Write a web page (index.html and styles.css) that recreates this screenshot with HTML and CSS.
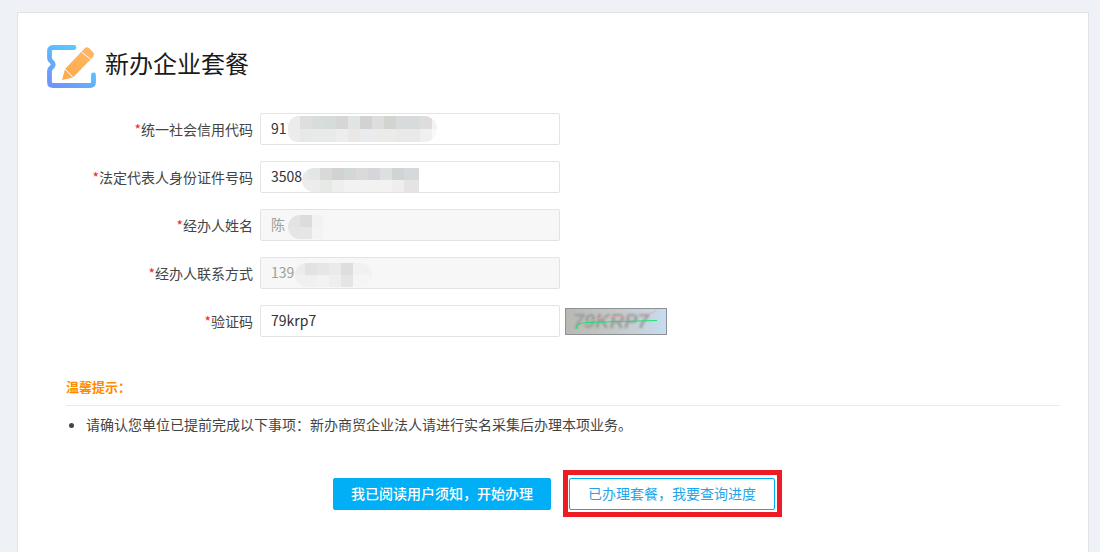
FILE: index.html
```html
<!DOCTYPE html>
<html lang="zh-CN">
<head>
<meta charset="utf-8">
<title>新办企业套餐</title>
<link rel="stylesheet" href="styles.css">
</head>
<body>
<main class="card">
  <header class="head">
    <svg class="logo" viewBox="0 0 50 44" width="50" height="44" aria-hidden="true">
      <defs>
        <linearGradient id="tk" x1="0.9" y1="0" x2="0.1" y2="1">
          <stop offset="0" stop-color="#4fd6ff"/>
          <stop offset="1" stop-color="#6f94fb"/>
        </linearGradient>
        <linearGradient id="pn" x1="1" y1="0" x2="0" y2="1">
          <stop offset="0" stop-color="#ffb868"/>
          <stop offset="1" stop-color="#ffa94a"/>
        </linearGradient>
      </defs>
      <path d="M28 3.500H7Q3.500 3.500 3.500 7V14Q3.500 16 5.500 17.500Q9 20.500 5.500 23.500Q3.500 25 3.500 27V38Q3.500 41.500 7 41.500H44Q47.500 41.500 47.500 38V31" fill="none" stroke="url(#tk)" stroke-width="4.800" stroke-linecap="round"/>
      <path d="M16 36L19 25L38.500 4.500Q40.500 2.500 43 4L47 8Q49 10.500 47 13L27 33.500Z" fill="url(#pn)"/>
      <path d="M19 25L27 33.500M36 8.500L45 15.500" stroke="#fff" stroke-width="1" fill="none"/>
    </svg>
    <h1 class="title">新办企业套餐</h1>
  </header>

  <form class="form">
    <div class="row">
      <label class="label"><span class="req">*</span>统一社会信用代码</label>
      <div class="field">
        <input class="input" type="text" value="91">
        <span class="blob blob-a"></span>
      </div>
    </div>
    <div class="row">
      <label class="label"><span class="req">*</span>法定代表人身份证件号码</label>
      <div class="field">
        <input class="input" type="text" value="3508">
        <span class="blob blob-b"></span>
      </div>
    </div>
    <div class="row">
      <label class="label"><span class="req">*</span>经办人姓名</label>
      <div class="field">
        <input class="input" type="text" value="陈" disabled>
        <span class="blob blob-c"></span>
      </div>
    </div>
    <div class="row">
      <label class="label"><span class="req">*</span>经办人联系方式</label>
      <div class="field">
        <input class="input" type="text" value="139" disabled>
        <span class="blob blob-d"></span>
      </div>
    </div>
    <div class="row">
      <label class="label"><span class="req">*</span>验证码</label>
      <div class="field">
        <input class="input" type="text" value="79krp7">
      </div>
      <div class="captcha">
        <span class="captcha-text">79KRP7</span>
        <svg class="captcha-lines" viewBox="0 0 102 27" width="102" height="27" aria-hidden="true">
          <path d="M11 19Q30 8 60 8T92 0" fill="none" stroke="#e9a7a7" stroke-width="0.800"/>
          <path d="M11 21Q11 15 22 14.500L92 12.500" fill="none" stroke="#19e36f" stroke-width="1.200"/>
        </svg>
      </div>
    </div>
  </form>

  <section class="tips">
    <h2 class="tips-title">温馨提示：</h2>
    <ul class="tips-list">
      <li>请确认您单位已提前完成以下事项：新办商贸企业法人请进行实名采集后办理本项业务。</li>
    </ul>
  </section>

  <div class="actions">
    <button class="btn btn-primary" type="button">我已阅读用户须知，开始办理</button>
    <button class="btn btn-outline" type="button">已办理套餐，我要查询进度</button>
  </div>
</main>
</body>
</html>
```

FILE: styles.css
```css
* { box-sizing: border-box; }

html, body { height: 100%; }

body {
  margin: 0;
  padding: 12px 11px 0 17px;
  background: #eef1f5;
  overflow: hidden;
  font-family: "Noto Sans CJK SC", "Liberation Sans", sans-serif;
  font-size: 14px;
  color: #333;
}

.card {
  height: 100%;
  background: #fff;
  border: 1px solid #e0e2e5;
  border-bottom: 0;
  padding: 31px 28px 0 29px;
}

.head {
  display: flex;
  align-items: center;
  gap: 9px;
  height: 44px;
}

.logo { flex: none; margin-left: -1px; }

.title {
  margin: 0 0 6px;
  font-size: 24px;
  font-weight: 400;
  line-height: 34px;
  color: #1a1a1a;
}

.form {
  display: flex;
  flex-direction: column;
  gap: 16px;
  margin-top: 25px;
  margin-left: -29px;
}

.row {
  display: flex;
  align-items: center;
  height: 32px;
}

.label {
  flex: none;
  width: 235px;
  text-align: right;
  line-height: 32px;
  color: #444;
}

.req { color: #f5222d; }

.field {
  position: relative;
  flex: none;
  width: 300px;
  height: 32px;
  margin-left: 7px;
}

.input {
  display: block;
  width: 100%;
  height: 100%;
  padding: 0 10px 2px;
  border: 1px solid #e3e3e3;
  border-radius: 2px;
  background: #fff;
  font: inherit;
  color: #333;
  outline: none;
}

.input:disabled {
  background: #f7f7f7;
  color: #a0a0a0;
  -webkit-text-fill-color: #a0a0a0;
  opacity: 1;
}

.blob {
  position: absolute;
  background-repeat: no-repeat;
  background-size: 100% 50%;
  background-position: left top, left bottom;
}

.blob-a {
  left: 28px;
  top: 3px;
  width: 149px;
  height: 26px;
  border-radius: 13px 15px 15px 11px;
  background-image:
    linear-gradient(90deg, #ebebeb 0 12px, #dedede 12px 24px, #d9dcdc 24px 36px, #d6dcd9 36px 48px, #d6d6d6 48px 60px, #e1e4e4 60px 72px, #d2d2d2 72px 84px, #dddddd 84px 96px, #d2d4d0 96px 108px, #d7dbdb 108px 132px, #dfdcdc 132px 144px, #f1f2f4 144px),
    linear-gradient(90deg, #ececec 0 12px, #e7e8e8 12px 24px, #e8e9e9 24px 48px, #eceeee 48px 60px, #e9e8e4 60px 72px, #e8ecef 72px 84px, #ebebe9 84px 108px, #e8e9e8 108px 132px, #eff0f0 132px 144px, #f8f8f8 144px);
}

.blob-b {
  left: 42px;
  top: 7px;
  width: 117px;
  height: 24px;
  border-radius: 12px 0 0 12px;
  background-image:
    linear-gradient(90deg, #e9e9e9 0 6px, #e3e6e6 6px 18px, #d9d9d9 18px 30px, #d2d2d2 30px 42px, #d2d8d8 42px 54px, #dadada 54px 66px, #d5d5da 66px 78px, #dbe0e0 78px 90px, #d2d3d3 90px 102px, #d5d9dc 102px),
    linear-gradient(90deg, #ececec 0 18px, #e7e9e7 18px 30px, #eeeeee 30px 42px, #f2f2f2 42px 90px, #eeeeee 90px 102px, #e4e4e4 102px);
}

.blob-c {
  left: 28px;
  top: 6px;
  width: 35px;
  height: 24px;
  border-radius: 12px 0 0 12px;
  background-image:
    linear-gradient(90deg, #e3e3e3 0 12px, #dcdcdc 12px 24px, #f0f3f1 24px),
    linear-gradient(90deg, #e5e5e5 0 12px, #e6e6e6 12px 24px, #f2f4f3 24px);
}

.blob-d {
  left: 35px;
  top: 6px;
  width: 77px;
  height: 24px;
  border-radius: 12px;
  background-image:
    linear-gradient(90deg, #ececec 0 10px, #e2e2e2 10px 22px, #e6e6e6 22px 34px, #eaeaea 34px 46px, #dedede 46px 58px, #f0f2f2 58px),
    linear-gradient(90deg, #f0f0f0 0 22px, #f2f2f2 22px 34px, #eeeeee 34px 46px, #e5e5e5 46px 58px, #f5f5f5 58px);
}

.captcha {
  position: relative;
  flex: none;
  width: 102px;
  height: 27px;
  margin-left: 5px;
  border: 1px solid #8d9096;
  background: linear-gradient(90deg, #b9b9b3 0%, #c5c9c6 50%, #c7dcee 100%);
  overflow: hidden;
}

.captcha-text {
  display: block;
  padding-left: 7px;
  font-family: "Liberation Sans", sans-serif;
  font-size: 20px;
  font-style: italic;
  font-weight: 700;
  line-height: 25px;
  color: #9a9da1;
  filter: blur(0.9px);
}

.captcha-lines {
  position: absolute;
  left: -1px;
  top: -1px;
}

.tips { margin-top: 40px; margin-left: 19px; }

.tips-title {
  margin: 0;
  height: 29px;
  border-bottom: 1px solid #eaeaea;
  font-size: 13px;
  font-weight: 700;
  line-height: 20px;
  color: #ff8a00;
}

.tips-list {
  margin: 8px 0 0;
  padding: 0 0 0 20px;
  line-height: 20px;
  font-size: 14px;
  color: #444;
}

.actions {
  position: relative;
  display: flex;
  justify-content: center;
  gap: 18px;
  margin-top: 44px;
  padding-left: 1px;
}

.btn {
  height: 32px;
  padding: 0 17px 2px;
  border: 1px solid #00aff0;
  border-radius: 2px;
  font: inherit;
  white-space: nowrap;
}

.btn-primary {
  background: #00aff5;
  color: #fff;
  font-weight: 500;
}

.btn-outline {
  position: relative;
  padding: 0 18px 2px;
  background: #fff;
  color: #1fa6e8;
}

.btn-outline::after {
  content: "";
  position: absolute;
  left: -7px;
  right: -8px;
  top: -9px;
  bottom: -8px;
  border: 5px solid #ed1c24;
}
```
